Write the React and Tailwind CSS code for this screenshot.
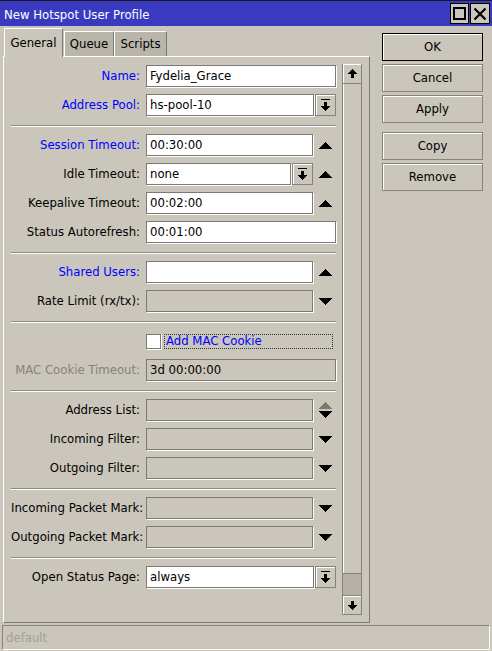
import React from 'react';

const FONT = "font-['DejaVu_Sans_Condensed','DejaVu_Sans',sans-serif]";

function TriUp({ gray }) {
  return (
    <svg width="13" height="7" viewBox="0 0 13 7" shapeRendering="crispEdges">
      <polygon points="0,7 6.5,0 13,7" fill={gray ? '#7a7a70' : '#000'} />
    </svg>
  );
}

function TriDown() {
  return (
    <svg width="13" height="7" viewBox="0 0 13 7" shapeRendering="crispEdges">
      <polygon points="0,0 13,0 6.5,7" fill="#000" />
    </svg>
  );
}

function DropIcon() {
  return (
    <svg width="11" height="12" viewBox="0 0 11 12" shapeRendering="crispEdges">
      <rect x="1" y="0" width="9" height="1" fill="#000" />
      <rect x="4" y="3" width="3" height="4" fill="#000" />
      <polygon points="0.5,7 10.5,7 5.5,12" fill="#000" />
    </svg>
  );
}

function ScrollArrow({ down }) {
  return (
    <svg width="10" height="9" viewBox="0 0 10 9" shapeRendering="crispEdges">
      {down ? (
        <>
          <rect x="3.5" y="0" width="3" height="4" fill="#000" />
          <polygon points="0,4 10,4 5,9" fill="#000" />
        </>
      ) : (
        <>
          <polygon points="0,5 10,5 5,0" fill="#000" />
          <rect x="3.5" y="5" width="3" height="4" fill="#000" />
        </>
      )}
    </svg>
  );
}

function Field({ value, disabled, className = 'w-[190px]' }) {
  return (
    <div
      className={`h-[22px] shrink-0 border border-[#7c7a74] shadow-[1px_1px_0_#fff] pl-[3px] flex items-center whitespace-nowrap overflow-hidden ${
        disabled ? 'bg-[#cac6bb]' : 'bg-white'
      } ${className}`}
    >
      {value}
    </div>
  );
}

function DropBtn() {
  return (
    <div className="ml-[1px] h-[22px] w-[21px] shrink-0 border border-[#85837c] bg-[#cac6bb] shadow-[inset_1px_1px_0_#fff] flex items-center justify-center">
      <DropIcon />
    </div>
  );
}

function Arrow({ children }) {
  return <div className="w-[23px] shrink-0 pl-[6px] flex flex-col justify-center gap-[2px]">{children}</div>;
}

function Row({ label, color = 'text-black', children }) {
  return (
    <div className="flex h-[22px] items-center">
      <div className={`w-[135px] shrink-0 pr-[6px] text-right whitespace-nowrap ${color}`}>{label}</div>
      {children}
    </div>
  );
}

function Sep() {
  return <div className="mt-[9px] mb-[7px] h-[2px] border-t border-t-[#8c8a83] border-b border-b-white" />;
}

function Section({ children }) {
  return <div className="flex flex-col gap-[7px]">{children}</div>;
}

function SideButton({ label, primary }) {
  return (
    <div
      className={`h-[28px] w-[101px] flex items-center justify-center shadow-[inset_1px_1px_0_#fff] border ${
        primary ? 'border-black' : 'border-[#85837c]'
      }`}
    >
      {label}
    </div>
  );
}

export default function App() {
  return (
    <div className={`w-[492px] h-[651px] bg-[#cac6bb] flex flex-col text-[13px] text-black ${FONT}`}>
      {/* title bar */}
      <div className="h-[26px] shrink-0 border-t border-t-[#1a1a1a] bg-[#3a3ac1] flex items-center pl-[4px] pr-[2px]">
        <span className="text-white text-[13px] flex-1 pt-[2px]">New Hotspot User Profile</span>
        <div className="flex gap-[1px]">
          <div className="w-[19px] h-[21px] border border-black bg-[#cac6bb] flex items-center justify-center">
            <div className="w-[13px] h-[13px] border-2 border-black" />
          </div>
          <div className="w-[20px] h-[21px] border border-black bg-[#cac6bb] flex items-center justify-center">
            <svg width="14" height="14" viewBox="0 0 14 14">
              <path d="M1.5 1.5 L12.5 12.5 M12.5 1.5 L1.5 12.5" stroke="#000" strokeWidth="2.2" />
            </svg>
          </div>
        </div>
      </div>

      <div className="flex">
        {/* left: tabs + panel */}
        <div className="ml-[3px] pt-[2px] flex flex-col">
          <div className="flex h-[28px] items-end pl-[1px]">
            <div className="relative z-10 -mb-[1px] h-[29px] w-[59px] bg-[#cac6bb] border-t border-l border-white border-r border-r-[#7c7a74] flex items-center justify-center">
              General
            </div>
            <div className="h-[25px] w-[50px] ml-[1px] bg-[#b9b5aa] border-t border-l border-white border-r border-r-[#7c7a74] flex items-center justify-center">
              Queue
            </div>
            <div className="h-[25px] w-[53px] bg-[#b9b5aa] border-t border-l border-white border-r border-r-[#7c7a74] flex items-center justify-center">
              Scripts
            </div>
          </div>

          <div className="h-[567px] w-[367px] border-t border-l border-white border-r border-b border-r-[#7c7a74] border-b-[#7c7a74] flex pl-[7px] pr-[7px] pt-[7px] pb-[7px]">
            <div className="w-[325px] pt-[1px] flex flex-col">
              <Section>
                <Row label="Name:" color="text-[#0000ff]">
                  <Field value="Fydelia_Grace" />
                </Row>
                <Row label="Address Pool:" color="text-[#0000ff]">
                  <Field value="hs-pool-10" className="w-[168px]" />
                  <DropBtn />
                </Row>
              </Section>
              <Sep />
              <Section>
                <Row label="Session Timeout:" color="text-[#0000ff]">
                  <Field value="00:30:00" className="w-[167px]" />
                  <Arrow><TriUp /></Arrow>
                </Row>
                <Row label="Idle Timeout:">
                  <Field value="none" className="w-[145px]" />
                  <DropBtn />
                  <Arrow><TriUp /></Arrow>
                </Row>
                <Row label="Keepalive Timeout:">
                  <Field value="00:02:00" className="w-[167px]" />
                  <Arrow><TriUp /></Arrow>
                </Row>
                <Row label="Status Autorefresh:">
                  <Field value="00:01:00" />
                </Row>
              </Section>
              <Sep />
              <Section>
                <Row label="Shared Users:" color="text-[#0000ff]">
                  <Field value="" className="w-[167px]" />
                  <Arrow><TriUp /></Arrow>
                </Row>
                <Row label="Rate Limit (rx/tx):">
                  <Field value="" disabled className="w-[167px]" />
                  <Arrow><TriDown /></Arrow>
                </Row>
              </Section>
              <Sep />
              <Section>
                <div className="flex h-[22px] items-center pl-[135px]">
                  <div className="w-[15px] h-[15px] bg-white border border-[#7c7a74] shadow-[1px_1px_0_#fff]" />
                  <div className="ml-[3px] h-[15px] w-[169px] border border-dotted border-[#333] flex items-center pl-[1px] text-[#0000ff]">
                    Add MAC Cookie
                  </div>
                </div>
                <Row label="MAC Cookie Timeout:" color="text-[#85837c]">
                  <Field value="3d 00:00:00" disabled />
                </Row>
              </Section>
              <Sep />
              <Section>
                <Row label="Address List:">
                  <Field value="" disabled className="w-[167px]" />
                  <Arrow>
                    <TriUp gray />
                    <TriDown />
                  </Arrow>
                </Row>
                <Row label="Incoming Filter:">
                  <Field value="" disabled className="w-[167px]" />
                  <Arrow><TriDown /></Arrow>
                </Row>
                <Row label="Outgoing Filter:">
                  <Field value="" disabled className="w-[167px]" />
                  <Arrow><TriDown /></Arrow>
                </Row>
              </Section>
              <Sep />
              <Section>
                <Row label="Incoming Packet Mark:">
                  <Field value="" disabled className="w-[167px]" />
                  <Arrow><TriDown /></Arrow>
                </Row>
                <Row label="Outgoing Packet Mark:">
                  <Field value="" disabled className="w-[167px]" />
                  <Arrow><TriDown /></Arrow>
                </Row>
              </Section>
              <Sep />
              <Section>
                <Row label="Open Status Page:">
                  <Field value="always" className="w-[168px]" />
                  <DropBtn />
                </Row>
              </Section>
            </div>

            {/* scrollbar */}
            <div className="ml-[6px] w-[20px] flex flex-col border-l border-r border-[#85837c]">
              <div className="h-[20px] shrink-0 border-b border-[#85837c] shadow-[inset_1px_1px_0_#fff] flex items-center justify-center">
                <ScrollArrow />
              </div>
              <div className="flex-1 shadow-[inset_1px_0_0_#fff]" />
              <div className="h-[22px] shrink-0 bg-[#b5b1a7] border-t border-[#85837c]" />
              <div className="h-[20px] shrink-0 border-t border-b border-[#85837c] shadow-[inset_1px_1px_0_#fff] flex items-center justify-center">
                <ScrollArrow down />
              </div>
            </div>
          </div>
        </div>

        {/* right buttons */}
        <div className="ml-[12px] pt-[7px] flex flex-col">
          <div className="flex flex-col gap-[3px]">
            <SideButton label="OK" primary />
            <SideButton label="Cancel" />
            <SideButton label="Apply" />
          </div>
          <div className="mt-[9px] flex flex-col gap-[3px]">
            <SideButton label="Copy" />
            <SideButton label="Remove" />
          </div>
        </div>
      </div>

      {/* status bar */}
      <div className="mt-[2px] mx-[2px] h-[25px] border border-[#85837c] border-b-white border-r-white flex items-center pl-[3px] text-[#a3a098]">
        default
      </div>
    </div>
  );
}
